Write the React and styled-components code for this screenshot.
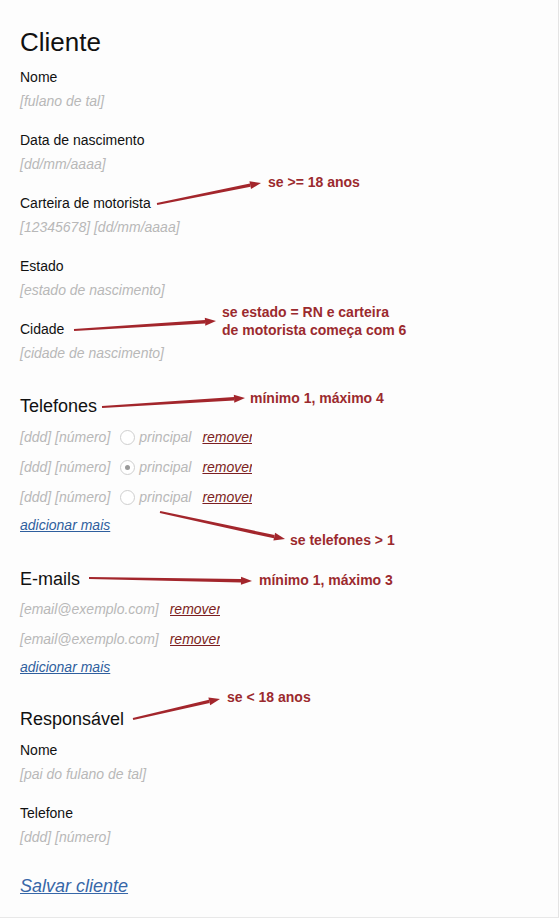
import styled, { createGlobalStyle } from "styled-components";

const GlobalStyle = createGlobalStyle`
  html, body {
    margin: 0;
    padding: 0;
    background: #ffffff;
  }
  body {
    font-family: "Liberation Sans", Arial, sans-serif;
  }
`;

const Page = styled.div`
  position: relative;
  box-sizing: border-box;
  display: flex;
  flex-direction: column;
  align-items: flex-start;
  width: 559px;
  height: 918px;
  padding: 27px 20px 0;
  background: #fdfdfd;
  border-right: 1px solid #e4e4e4;
  border-bottom: 1px solid #e8e8e8;
  color: #111;
`;

const Title = styled.h1`
  margin: 0 0 8px;
  font-size: 26px;
  font-weight: 400;
  line-height: 30px;
`;

const Field = styled.div`
  display: flex;
  flex-direction: column;
  margin-bottom: 15px;
`;

const Label = styled.div`
  font-size: 14px;
  line-height: 24px;
`;

const Placeholder = styled.span`
  font-size: 14px;
  line-height: 24px;
  font-style: italic;
  color: #b8b8b8;
`;

const Section = styled.section`
  display: flex;
  flex-direction: column;
  align-items: flex-start;
  margin-top: ${(p) => p.$top ?? 14}px;
  margin-bottom: ${(p) => p.$bottom ?? 15}px;
`;

const Heading = styled.h2`
  margin: 0 0 ${(p) => p.$gap || 4}px;
  font-size: 18px;
  font-weight: 400;
  line-height: 24px;
`;

const Row = styled.div`
  display: flex;
  align-items: center;
  height: 30px;
  font-size: 14px;
`;

const Radio = styled.span`
  box-sizing: border-box;
  width: 15px;
  height: 15px;
  margin: 0 4px 0 10px;
  border: 1px solid #cfcfcf;
  border-radius: 50%;
  background: #fff;
  display: inline-flex;
  align-items: center;
  justify-content: center;

  &::after {
    content: "";
    width: 5px;
    height: 5px;
    border-radius: 50%;
    background: ${(p) => (p.$checked ? "#9a9a9a" : "transparent")};
  }
`;

const Remove = styled.a`
  display: inline-block;
  width: 50px;
  overflow: hidden;
  white-space: nowrap;
  margin-left: ${(p) => p.$gap || 11}px;
  font-size: 14px;
  line-height: 18px;
  font-style: italic;
  color: #7c1f22;
  text-decoration: underline;
`;

const AddMore = styled.a`
  display: block;
  font-size: 14px;
  line-height: 26px;
  font-style: italic;
  color: #2f5f9e;
  text-decoration: underline;
`;

const Save = styled.a`
  display: block;
  margin-top: 10px;
  font-size: 18px;
  line-height: 24px;
  font-style: italic;
  color: #3767a8;
  text-decoration: underline;
`;

const Note = styled.div`
  position: absolute;
  left: ${(p) => p.$x}px;
  top: ${(p) => p.$y}px;
  font-size: 14px;
  font-weight: 700;
  line-height: 18px;
  color: #9b2a2e;
  white-space: nowrap;
`;

const Overlay = styled.svg`
  position: absolute;
  left: 0;
  top: 0;
  pointer-events: none;
`;

function Arrow({ x1, y1, x2, y2 }) {
  const dx = x2 - x1;
  const dy = y2 - y1;
  const len = Math.hypot(dx, dy);
  const ux = dx / len;
  const uy = dy / len;
  const px = -uy;
  const py = ux;
  const head = 11;
  const half = 4;
  const bx = x2 - ux * head;
  const by = y2 - uy * head;
  const w0 = 1.1;
  const w1 = 1.7;
  const body = [
    [x1 + px * w0, y1 + py * w0],
    [bx + px * w1, by + py * w1],
    [bx - px * w1, by - py * w1],
    [x1 - px * w0, y1 - py * w0],
  ];
  const tip = [
    [x2, y2],
    [bx + px * half, by + py * half],
    [bx - px * half, by - py * half],
  ];
  const pts = (a) => a.map((p) => p.join(",")).join(" ");
  return (
    <g fill="#a3262c">
      <polygon points={pts(body)} />
      <polygon points={pts(tip)} />
    </g>
  );
}

const fields = [
  ["Nome", "[fulano de tal]"],
  ["Data de nascimento", "[dd/mm/aaaa]"],
  ["Carteira de motorista", "[12345678] [dd/mm/aaaa]"],
  ["Estado", "[estado de nascimento]"],
  ["Cidade", "[cidade de nascimento]"],
];

const arrows = [
  { x1: 157, y1: 204, x2: 261, y2: 183 },
  { x1: 74, y1: 330, x2: 216, y2: 321 },
  { x1: 102, y1: 407, x2: 245, y2: 398 },
  { x1: 160, y1: 512, x2: 285, y2: 539 },
  { x1: 89, y1: 578, x2: 252, y2: 581 },
  { x1: 133, y1: 719, x2: 220, y2: 699 },
];

export default function App() {
  return (
    <>
      <GlobalStyle />
      <Page>
        <Title>Cliente</Title>

        {fields.map(([label, hint]) => (
          <Field key={label}>
            <Label>{label}</Label>
            <Placeholder>{hint}</Placeholder>
          </Field>
        ))}

        <Section>
          <Heading>Telefones</Heading>
          {[false, true, false].map((checked, i) => (
            <Row key={i}>
              <Placeholder>[ddd] [número]</Placeholder>
              <Radio $checked={checked} />
              <Placeholder>principal</Placeholder>
              <Remove>remover</Remove>
            </Row>
          ))}
          <AddMore>adicionar mais</AddMore>
        </Section>

        <Section>
          <Heading $gap={3}>E-mails</Heading>
          {[0, 1].map((i) => (
            <Row key={i}>
              <Placeholder>[email@exemplo.com]</Placeholder>
              <Remove $gap={11}>remover</Remove>
            </Row>
          ))}
          <AddMore>adicionar mais</AddMore>
        </Section>

        <Section $top={12} $bottom={0}>
          <Heading $gap={7}>Responsável</Heading>
          <Field>
            <Label>Nome</Label>
            <Placeholder>[pai do fulano de tal]</Placeholder>
          </Field>
          <Field>
            <Label>Telefone</Label>
            <Placeholder>[ddd] [número]</Placeholder>
          </Field>
        </Section>

        <Save>Salvar cliente</Save>

        <Overlay width="559" height="920">
          {arrows.map((a, i) => (
            <Arrow key={i} {...a} />
          ))}
        </Overlay>

        <Note $x={268} $y={173}>se &gt;= 18 anos</Note>
        <Note $x={222} $y={303}>
          se estado = RN e carteira
          <br />
          de motorista começa com 6
        </Note>
        <Note $x={250} $y={389}>mínimo 1, máximo 4</Note>
        <Note $x={290} $y={531}>se telefones &gt; 1</Note>
        <Note $x={259} $y={571}>mínimo 1, máximo 3</Note>
        <Note $x={227} $y={688}>se &lt; 18 anos</Note>
      </Page>
    </>
  );
}
